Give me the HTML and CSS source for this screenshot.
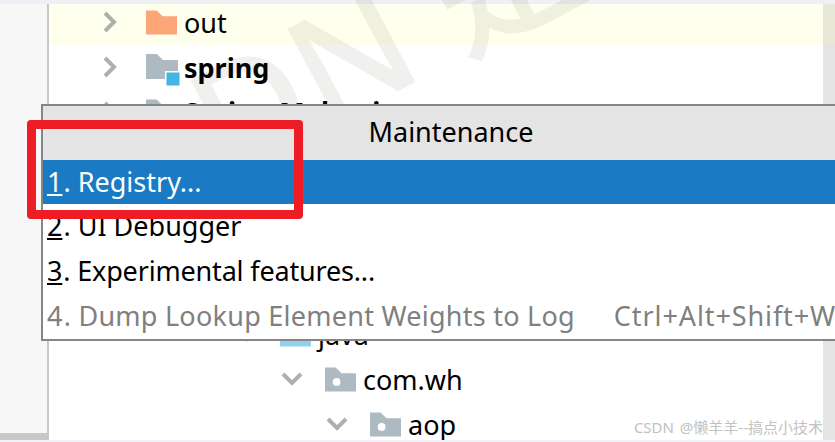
FILE: index.html
```html
<!DOCTYPE html>
<html lang="en">
<head>
    <meta charset="UTF-8">
    <title>Maintenance</title>
    <link rel="stylesheet" href="styles.css">
</head>
<body>
    <div class="top-strip"></div>
    <div class="ide">
        <div class="sidebar"></div>

        <!-- Project tree -->
        <div class="tree">
            <div class="row row-first level-1">
                <svg class="arrow" viewBox="0 0 16 24"><path d="M3 3 L12 12 L3 21" /></svg>
                <svg class="folder" viewBox="0 0 32 25"><path class="fill-orange" d="M0 0 H11 L17 6 H32 V25 H0 Z" /></svg>
                <span class="name">out</span>
            </div>
            <div class="row level-1">
                <svg class="arrow" viewBox="0 0 16 24"><path d="M3 3 L12 12 L3 21" /></svg>
                <svg class="folder module" viewBox="0 0 34 32"><path class="fill-grey" d="M0 0 H11 L17 6 H32 V25 H0 Z" /><rect class="badge-white" x="19" y="17" width="15" height="15" /><rect class="fill-cyan" x="20.500" y="18.500" width="13" height="13" /></svg>
                <span class="name bold">spring</span>
            </div>
            <div class="row level-1">
                <svg class="arrow" viewBox="0 0 16 24"><path d="M3 3 L12 12 L3 21" /></svg>
                <svg class="folder" viewBox="0 0 32 25"><path class="fill-grey" d="M0 0 H11 L17 6 H32 V25 H0 Z" /></svg>
                <span class="name bold">Spring-Malvation</span>
            </div>
            <div class="row"></div>
            <div class="row"></div>
            <div class="row"></div>
            <div class="row"></div>
            <div class="row level-4">
                <svg class="arrow-down" viewBox="0 0 24 16"><path d="M3 3 L12 12 L21 3" /></svg>
                <svg class="folder" viewBox="0 0 32 25"><path class="fill-blue" d="M0 0 H11 L17 6 H32 V25 H0 Z" /></svg>
                <span class="name">java</span>
            </div>
            <div class="row level-5">
                <svg class="arrow-down" viewBox="0 0 24 16"><path d="M3 3 L12 12 L21 3" /></svg>
                <svg class="folder" viewBox="0 0 32 25"><path class="fill-grey" d="M0 0 H11 L17 6 H32 V25 H0 Z" /><circle class="hole" cx="12" cy="15" r="4" /></svg>
                <span class="name">com.wh</span>
            </div>
            <div class="row level-6">
                <svg class="arrow-down" viewBox="0 0 24 16"><path d="M3 3 L12 12 L21 3" /></svg>
                <svg class="folder" viewBox="0 0 32 25"><path class="fill-grey" d="M0 0 H11 L17 6 H32 V25 H0 Z" /><circle class="hole" cx="12" cy="15" r="4" /></svg>
                <span class="name">aop</span>
            </div>
        </div>
        <div class="scrollbar"></div>
    </div>
    <div class="bottom-strip"></div>

    <!-- Faint watermark over the tree -->
    <div class="watermark">DN 是</div>

    <!-- Popup -->
    <div class="popup">
        <div class="popup-title">Maintenance</div>
        <div class="item selected"><span class="label"><u>1</u>. Registry...</span></div>
        <div class="item"><span class="label"><u>2</u>. UI Debugger</span></div>
        <div class="item"><span class="label tight"><u>3</u>. Experimental features...</span></div>
        <div class="item disabled"><span class="label wide"><span class="num">4</span>. Dump Lookup Element Weights to Log</span><span class="shortcut">Ctrl+Alt+Shift+W</span></div>
    </div>

    <div class="red-box"></div>
    <div class="credit">CSDN @懒羊羊--搞点小技术</div>
</body>
</html>
```

FILE: styles.css
```css
html, body {
    margin: 0;
    padding: 0;
}

body {
    position: relative;
    width: 835px;
    height: 442px;
    overflow: hidden;
    display: flex;
    flex-direction: column;
    background-color: #ffffff;
    font-family: "Noto Sans", "Noto Sans CJK SC", sans-serif;
    color: #000000;
}

.top-strip {
    height: 4px;
    background-color: #eff0f6;
}

.bottom-strip {
    height: 2px;
    background-color: #f0f0f8;
}

.ide {
    flex: 1;
    display: flex;
    min-height: 0;
}

.sidebar {
    width: 47px;
    background-color: #f7f7f7;
    border-right: 2px solid #c8c8c8;
    border-bottom: 7px solid #c8c8c8;
    height: 429px;
}

/* Tree */
.tree {
    flex: 1;
    overflow: hidden;
}

.row {
    height: 44.6px;
    display: flex;
    align-items: center;
    font-size: 27px;
}

.row-first {
    height: 41px;
    box-sizing: border-box;
    padding-bottom: 5px;
    background-color: #ffffee;
}

.level-1 { padding-left: 53px; }
.level-4 { padding-left: 186px; }
.level-5 { padding-left: 231px; }
.level-6 { padding-left: 276px; }

.arrow {
    width: 16px;
    height: 24px;
    margin-right: 28px;
}

.arrow-down {
    width: 24px;
    height: 16px;
    margin-right: 21px;
}

.arrow path, .arrow-down path {
    fill: none;
    stroke: #aeb0ac;
    stroke-width: 4;
}

.folder {
    width: 31px;
    height: 25px;
    margin-right: 7px;
    flex-shrink: 0;
}

.module {
    width: 34px;
    height: 32px;
    margin-right: 4px;
    margin-top: 6px;
}

.fill-orange { fill: #fca577; }
.fill-grey { fill: #aebac1; }
.fill-blue { fill: #8fd3ee; }
.fill-cyan { fill: #40b6e0; }
.badge-white { fill: #ffffff; }
.hole { fill: #ffffff; }

.name {
    line-height: 1;
    white-space: nowrap;
}

.bold {
    font-weight: 700;
}

.scrollbar {
    width: 12px;
    background: linear-gradient(#e8e8d8 41px, #e4e4e4 41px);
}

.watermark {
    position: absolute;
    left: 166px;
    top: 64px;
    font-size: 150px;
    line-height: 1;
    font-weight: 500;
    white-space: nowrap;
    color: rgba(60, 60, 30, 0.075);
    transform: rotate(-28deg);
    transform-origin: left top;
}

/* Popup */
.popup {
    position: absolute;
    left: 41px;
    top: 104px;
    width: 800px;
    background-color: #ffffff;
    border: 2px solid #868686;
    font-size: 27px;
}

.popup-title {
    height: 54px;
    line-height: 52px;
    text-align: center;
    background-color: #e4e4e4;
    padding-right: 6px;
    box-sizing: border-box;
    width: 822px;
}

.item {
    height: 45px;
    box-sizing: border-box;
    padding: 0 0 2px 4px;
    display: flex;
    align-items: center;
    white-space: nowrap;
}

.item u, .item .num {
    margin-right: 1px;
}

.selected {
    height: 44px;
    background-color: #1a7bc4;
    color: #ffffff;
}

.disabled {
    color: #808080;
}

.tight {
    letter-spacing: -0.17px;
}

.wide {
    letter-spacing: 0.25px;
}

.shortcut {
    margin-left: 39px;
    letter-spacing: 0.9px;
}

.red-box {
    position: absolute;
    left: 27px;
    top: 120px;
    width: 276px;
    height: 99px;
    box-sizing: border-box;
    border: 9px solid #ee1c25;
    border-radius: 4px;
}

.credit {
    position: absolute;
    right: 12px;
    bottom: 5px;
    font-size: 15px;
    word-spacing: 2px;
    color: #c2c2c2;
    white-space: nowrap;
}
```
